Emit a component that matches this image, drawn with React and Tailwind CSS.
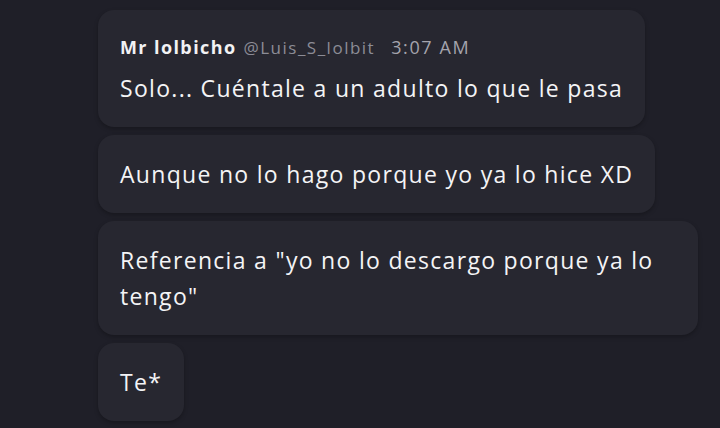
const messages = [
  { id: 1, header: true, text: 'Solo... Cuéntale a un adulto lo que le pasa' },
  { id: 2, text: 'Aunque no lo hago porque yo ya lo hice XD' },
  { id: 3, text: 'Referencia a "yo no lo descargo porque ya lo tengo"' },
  { id: 4, text: 'Te*' },
];

export default function App() {
  return (
    <div
      className="w-[720px] h-[428px] overflow-hidden bg-[#1f1f28] pt-[10px] pl-[98px]"
      style={{ fontFamily: '"Open Sans", Lato, sans-serif' }}
    >
      <div className="flex flex-col items-start gap-[8px]">
        {messages.map((m) => (
          <div
            key={m.id}
            className="max-w-[600px] rounded-[16px] bg-[#272730] px-[22px] py-[21px] shadow-[0_2px_4px_rgba(0,0,0,0.25)]"
          >
            {m.header && (
              <div className="flex items-baseline mt-[3px] mb-[10px] h-[26px] leading-[26px]">
                <span className="text-[18px] font-bold tracking-[1.4px] text-[#f2f2f4]">Mr lolbicho</span>
                <span className="ml-[7px] text-[17px] tracking-[1.5px] text-[#8c8c96]">@Luis_S_lolbit</span>
                <span className="ml-[16px] text-[18px] tracking-[1.6px] text-[#a4a4ad]">3:07 AM</span>
              </div>
            )}
            <p className="text-[23px] leading-[36px] tracking-[1.3px] text-[#f4f4f6]">{m.text}</p>
          </div>
        ))}
      </div>
    </div>
  );
}
